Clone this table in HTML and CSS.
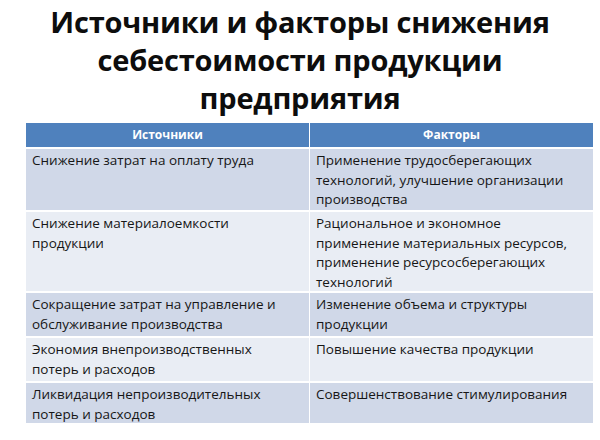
FILE: index.html
```html
<!DOCTYPE html>
<html lang="ru">
<head>
<meta charset="utf-8">
<link rel="stylesheet" href="styles.css">
</head>
<body>
<div class="page">
  <h1 class="title">Источники и факторы снижения<br>себестоимости продукции<br>предприятия</h1>
  <div class="table">
    <div class="head">Источники</div>
    <div class="head">Факторы</div>
    <div class="cell dark">Снижение затрат на оплату труда</div>
    <div class="cell dark">Применение трудосберегающих<br>технологий, улучшение организации<br>производства</div>
    <div class="cell light">Снижение материалоемкости<br>продукции</div>
    <div class="cell light">Рациональное и экономное<br>применение материальных ресурсов,<br>применение ресурсосберегающих<br>технологий</div>
    <div class="cell dark">Сокращение затрат на управление и<br>обслуживание производства</div>
    <div class="cell dark">Изменение объема и структуры<br>продукции</div>
    <div class="cell light">Экономия внепроизводственных<br>потерь и расходов</div>
    <div class="cell light">Повышение качества продукции</div>
    <div class="cell dark">Ликвидация непроизводительных<br>потерь и расходов</div>
    <div class="cell dark">Совершенствование стимулирования</div>
  </div>
</div>
</body>
</html>
```
FILE: styles.css
```css
html, body {
  margin: 0;
  padding: 0;
  background: #ffffff;
}
.page {
  width: 600px;
  height: 440px;
  font-family: "Open Sans", "Noto Sans", sans-serif;
  color: #111111;
}
.title {
  margin: 0;
  padding: 3px 0 0 0;
  height: 120px;
  box-sizing: border-box;
  text-align: center;
  font-size: 29px;
  line-height: 38px;
  font-weight: 700;
  letter-spacing: -0.2px;
  color: #0d0d0d;
}
.table {
  margin: 3px 0 0 26px;
  width: 567px;
  display: grid;
  grid-template-columns: 283px 283px;
  grid-template-rows: 24px 61px 79px 43px 43px 40px;
  column-gap: 1px;
  row-gap: 2px;
}
.head {
  background: #4f81bd;
  color: #ffffff;
  font-weight: 700;
  font-size: 12px;
  text-align: center;
  line-height: 24px;
}
.cell {
  padding: 2px 6px 0 6px;
  font-size: 13.5px;
  line-height: 19.5px;
  color: #161616;
}
.dark {
  background: #d0d8e8;
}
.light {
  background: #e9edf4;
}
```
